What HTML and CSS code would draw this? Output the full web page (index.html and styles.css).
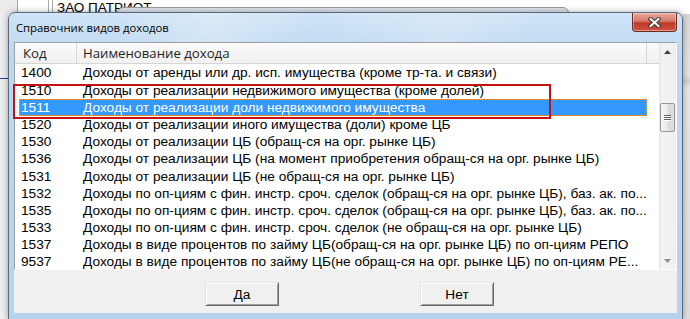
FILE: index.html
```html
<!DOCTYPE html>
<html lang="ru">
<head>
    <meta charset="UTF-8">
    <title>Справочник видов доходов</title>
    <link rel="stylesheet" href="styles.css">
</head>
<body>
<div class="desk">
    <div class="under">
        <div class="under-corner"></div>
        <div class="under-line line-a"></div>
        <div class="under-line line-b"></div>
        <div class="under-line line-c"></div>
        <div class="under-text">ЗАО ПАТРИОТ</div>
        <div class="under-left"><div class="under-blue"></div></div>
        <div class="under-right"></div>
    </div>
    <div class="back-window"></div>

    <div class="dialog">
        <div class="titlebar">
            <span class="title">Справочник видов доходов</span>
            <button class="close">
                <svg width="13" height="11" viewBox="0 0 13 11">
                    <path d="M2.5 2 L10.5 9 M10.5 2 L2.5 9" stroke="#3b3b3b" stroke-width="4" stroke-linecap="square"/>
                    <path d="M2.5 2 L10.5 9 M10.5 2 L2.5 9" stroke="#fff" stroke-width="2" stroke-linecap="square"/>
                </svg>
            </button>
        </div>
        <div class="client">
            <div class="list">
                <div class="list-main">
                    <div class="list-head">
                        <div class="h-code">Код</div>
                        <div class="h-name">Наименование дохода</div>
                        <div class="h-rest"></div>
                    </div>
                    <div class="rows">
                        <div class="row"><div class="c-code">1400</div><div class="c-name">Доходы от аренды или др. исп. имущества (кроме тр-та. и связи)</div></div>
                        <div class="row"><div class="c-code">1510</div><div class="c-name">Доходы от реализации недвижимого имущества (кроме долей)</div></div>
                        <div class="row selected"><div class="c-code">1511</div><div class="c-name">Доходы от реализации доли недвижимого имущества</div></div>
                        <div class="row"><div class="c-code">1520</div><div class="c-name">Доходы от реализации иного имущества (доли) кроме ЦБ</div></div>
                        <div class="row"><div class="c-code">1530</div><div class="c-name">Доходы от реализации ЦБ (обращ-ся на орг. рынке ЦБ)</div></div>
                        <div class="row"><div class="c-code">1536</div><div class="c-name">Доходы от реализации ЦБ (на момент приобретения обращ-ся на орг. рынке ЦБ)</div></div>
                        <div class="row"><div class="c-code">1531</div><div class="c-name">Доходы от реализации ЦБ (не обращ-ся на орг. рынке ЦБ)</div></div>
                        <div class="row"><div class="c-code">1532</div><div class="c-name">Доходы по оп-циям с фин. инстр. сроч. сделок (обращ-ся на орг. рынке ЦБ), баз. ак. по...</div></div>
                        <div class="row"><div class="c-code">1535</div><div class="c-name">Доходы по оп-циям с фин. инстр. сроч. сделок (обращ-ся на орг. рынке ЦБ), баз. ак. по...</div></div>
                        <div class="row"><div class="c-code">1533</div><div class="c-name">Доходы по оп-циям с фин. инстр. сроч. сделок (не обращ-ся на орг. рынке ЦБ)</div></div>
                        <div class="row"><div class="c-code">1537</div><div class="c-name">Доходы в виде процентов по займу ЦБ(обращ-ся на орг. рынке ЦБ) по оп-циям РЕПО</div></div>
                        <div class="row"><div class="c-code">9537</div><div class="c-name">Доходы в виде процентов по займу ЦБ(не обращ-ся на орг. рынке ЦБ) по оп-циям РЕ...</div></div>
                    </div>
                </div>
                <div class="scrollbar">
                    <div class="sb-arrow">
                        <svg width="7" height="4" viewBox="0 0 7 4"><path d="M3.5 0 L7 4 L0 4 Z" fill="#404040"/></svg>
                    </div>
                    <div class="sb-track">
                        <div class="sb-thumb">
                            <span></span><span></span><span></span>
                        </div>
                    </div>
                    <div class="sb-arrow">
                        <svg width="7" height="4" viewBox="0 0 7 4"><path d="M0 0 L7 0 L3.5 4 Z" fill="#8c8c8c"/></svg>
                    </div>
                </div>
            </div>
            <div class="buttons">
                <button class="btn">Да</button>
                <button class="btn">Нет</button>
            </div>
        </div>
    </div>

    <div class="mark"></div>
</div>
</body>
</html>
```

FILE: styles.css
```css
body {
    margin: 0;
    background-color: #fff;
    font-family: "Liberation Sans", Arial, sans-serif;
}

.desk {
    position: relative;
    width: 690px;
    height: 319px;
    overflow: hidden;
    background-color: #fff;
}

/* window lying under the dialog */
.under {
    position: absolute;
    left: 0;
    top: 0;
    width: 690px;
    height: 319px;
}

.under-corner {
    position: absolute;
    left: 0;
    top: 0;
    width: 17px;
    height: 14px;
    background-color: #ececec;
}

.under-line {
    position: absolute;
    top: 0;
    width: 1px;
    height: 14px;
    background-color: #a8a8a8;
}

.line-a { left: 17px; }
.line-b { left: 48px; }
.line-c { left: 52px; }

.under-text {
    position: absolute;
    left: 57px;
    top: 0;
    font-size: 13.5px;
    line-height: 15px;
    color: #000;
}

.under-left {
    position: absolute;
    left: 0;
    top: 14px;
    width: 8px;
    height: 305px;
    background-color: #eceeef;
}

.under-blue {
    margin-top: 64px;
    height: 1px;
    background-color: #1f3f8f;
}

.under-right {
    position: absolute;
    left: 683px;
    top: 14px;
    width: 7px;
    height: 305px;
    background: linear-gradient(#d8d8d8, #e4e4e4 20%, #d0d0d0 22%, #e6e6e6 24%, #dedede);
}

.back-window {
    position: absolute;
    left: 117px;
    top: 7px;
    width: 450px;
    height: 40px;
    border: 1px solid #9a9a9a;
    border-radius: 6px 6px 0 0;
    background-color: #dde4ea;
}

/* dialog */
.dialog {
    position: absolute;
    left: 8px;
    top: 12px;
    width: 675px;
    height: 308px;
    box-sizing: border-box;
    padding: 0 5px 6px 5px;
    border: 1px solid #5a6a7c;
    border-radius: 7px 7px 0 0;
    background: linear-gradient(#cfe4f6, #bcd8f1 14%, #b6d3ee);
    box-shadow: 0 0 6px rgba(0, 0, 0, 0.35);
    display: flex;
    flex-direction: column;
}

.titlebar {
    height: 29px;
    display: flex;
    justify-content: space-between;
    align-items: flex-start;
    background: linear-gradient(100deg, rgba(255,255,255,0) 15%, rgba(255,255,255,0.25) 30%, rgba(255,255,255,0) 45%, rgba(255,255,255,0.2) 65%, rgba(255,255,255,0) 80%);
}

.title {
    margin-top: 7px;
    padding-left: 2px;
    font-family: "Open Sans", "Liberation Sans", sans-serif;
    font-size: 11.3px;
    line-height: 16px;
    color: #000;
}

.close {
    width: 45px;
    height: 19px;
    padding: 0;
    border: 1px solid #6d2a22;
    border-top: none;
    border-radius: 0 0 4px 4px;
    background: linear-gradient(#e9a99b, #d47a6b 45%, #c0392b 55%, #c94b3a 90%, #d86c5b);
    box-shadow: inset 0 0 0 1px rgba(255, 255, 255, 0.35);
    display: flex;
    justify-content: center;
    align-items: center;
}

.client {
    flex: 1;
    background-color: #f0f0f0;
    display: flex;
    flex-direction: column;
}

.list {
    height: 228px;
    box-sizing: border-box;
    border: 1px solid;
    border-color: #a0a0a0 #fcfcfc #fcfcfc #a0a0a0;
    background-color: #fff;
    display: flex;
}

.list-main {
    flex: 1;
    overflow: hidden;
}

.list-head {
    height: 20px;
    display: flex;
    border-bottom: 1px solid #d5d5d5;
    background: linear-gradient(#fafafa, #f1f1f1);
    font-family: "Open Sans", "Liberation Sans", sans-serif;
    font-size: 13.2px;
    line-height: 20px;
    color: #1e1e1e;
}

.h-code {
    width: 62px;
    box-sizing: border-box;
    padding-left: 8px;
    border-right: 1px solid #d5d5d5;
}

.h-name {
    width: 570px;
    box-sizing: border-box;
    padding-left: 6px;
    border-right: 1px solid #d5d5d5;
}

.h-rest {
    flex: 1;
}

.rows {
    padding-top: 0.4px;
}

.row {
    margin-left: 4px;
    width: 628px;
    height: 17.2px;
    display: flex;
    font-size: 13.7px;
    line-height: 17px;
    color: #000;
    white-space: nowrap;
}

.c-code {
    width: 58px;
    box-sizing: border-box;
    padding-left: 2px;
}

.c-name {
    flex: 1;
    padding-left: 6px;
    overflow: hidden;
}

.selected {
    background-color: #3399ff;
    color: #fff;
    outline: 1px dotted #ff9a3c;
    outline-offset: -1px;
}

/* scrollbar */
.scrollbar {
    width: 17px;
    display: flex;
    flex-direction: column;
    background: linear-gradient(90deg, #e6e6e6, #f3f3f3 20%, #efefef);
}

.sb-arrow {
    height: 17px;
    display: flex;
    justify-content: center;
    align-items: center;
}

.sb-track {
    flex: 1;
}

.sb-thumb {
    margin: 43px 1px 0 1px;
    height: 29px;
    box-sizing: border-box;
    border: 1px solid #979797;
    border-radius: 2px;
    background: linear-gradient(90deg, #f6f6f6, #e8e8e8 50%, #d9d9d9 55%, #dedede);
    display: flex;
    flex-direction: column;
    justify-content: center;
    align-items: center;
    gap: 1px;
}

.sb-thumb span {
    width: 7px;
    height: 1px;
    background-color: #5f5f5f;
    box-shadow: 0 1px 0 #fff;
}

/* buttons */
.buttons {
    display: flex;
    gap: 141px;
    padding: 12px 0 0 191px;
}

.btn {
    width: 74px;
    height: 24px;
    padding: 0;
    border: 1px solid;
    border-color: #e3e3e3 #696969 #696969 #e3e3e3;
    background-color: #f0f0f0;
    box-shadow: inset 1px 1px 0 #fff, inset -1px -1px 0 #a0a0a0;
    font-family: "Liberation Sans", Arial, sans-serif;
    font-size: 13.7px;
    color: #000;
}

/* red frame drawn over the screenshot */
.mark {
    position: absolute;
    left: 13px;
    top: 84px;
    width: 538px;
    height: 35px;
    box-sizing: border-box;
    border: 2px solid #c21212;
}
```
